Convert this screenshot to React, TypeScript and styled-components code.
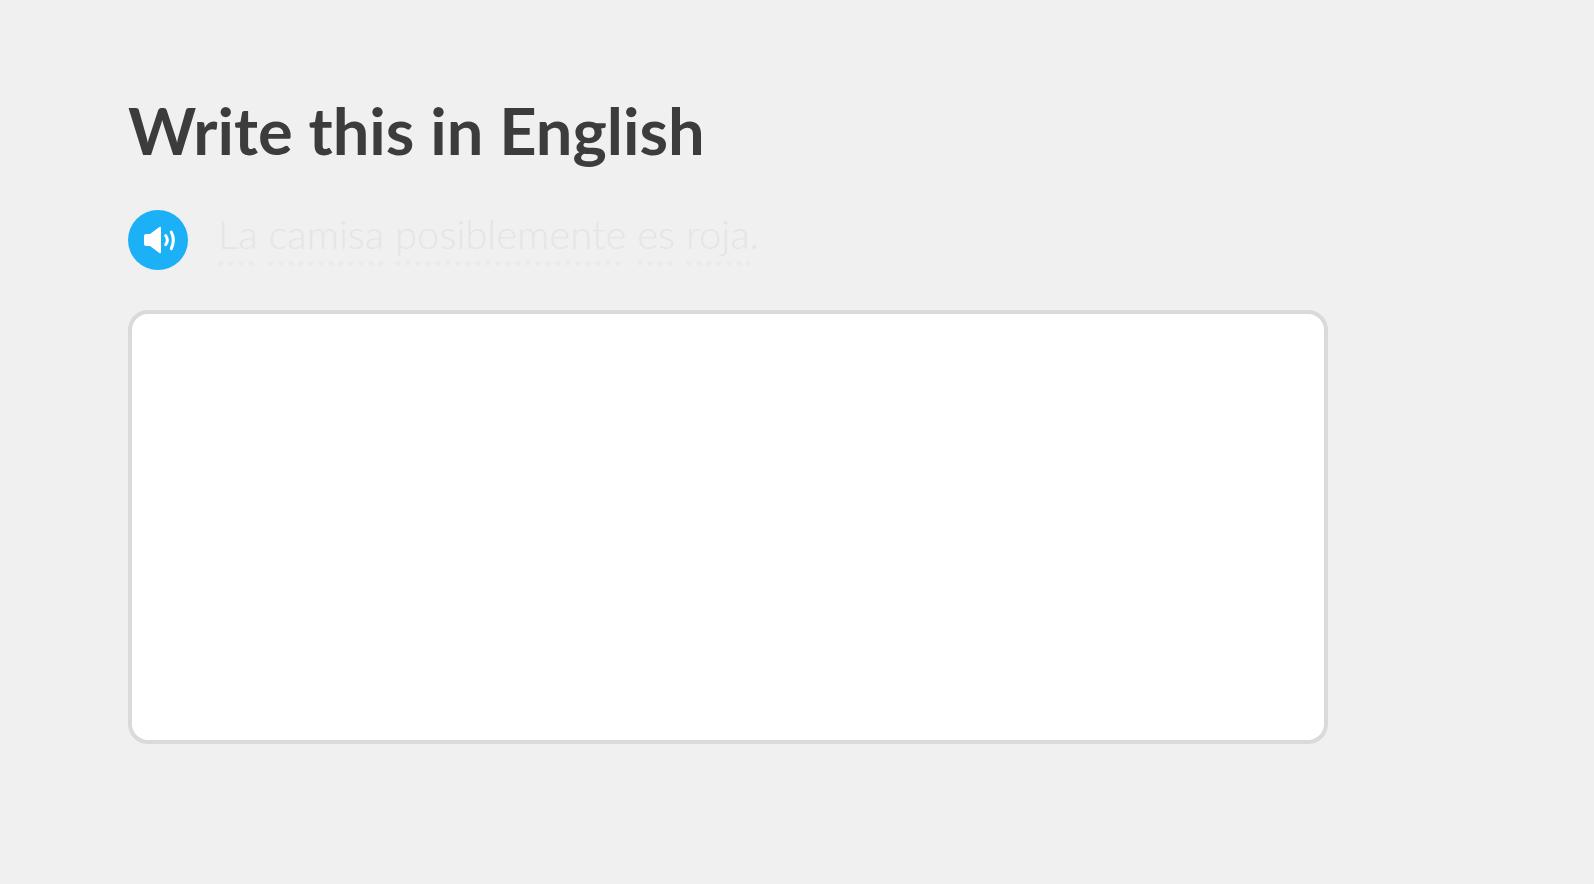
import React, { useState } from "react";
import styled, { createGlobalStyle } from "styled-components";

const GlobalStyle = createGlobalStyle`
  *, *::before, *::after { box-sizing: border-box; }
  body {
    margin: 0;
    background: #f0f0f0;
    font-family: Lato, "Open Sans", sans-serif;
  }
`;

const Page = styled.main`
  display: flex;
  flex-direction: column;
  min-height: 100vh;
  padding: 90px 266px 140px 128px;
`;

const Title = styled.h1`
  margin: 0 0 40px;
  color: #3c3c3c;
  font-size: 65px;
  font-weight: 700;
  line-height: 80px;
`;

const Prompt = styled.div`
  display: flex;
  align-items: flex-start;
  gap: 30px;
  margin-bottom: 40px;
`;

const SpeakerButton = styled.button`
  display: flex;
  align-items: center;
  justify-content: center;
  flex: none;
  width: 60px;
  height: 60px;
  padding: 0;
  border: 0;
  border-radius: 50%;
  background: #1cb0f6;
  cursor: pointer;
`;

const Sentence = styled.p`
  margin: 0;
  color: #e5e5e5;
  font-size: 40px;
  font-weight: 300;
  line-height: 48px;
`;

const Word = styled.span`
  padding-bottom: 8px;
  background: radial-gradient(circle at 3px 2px, #eaeaea 2px, transparent 3px) left bottom / 10px 5px repeat-x;
`;

const Answer = styled.textarea`
  display: block;
  width: 100%;
  height: 434px;
  padding: 20px 24px;
  border: 4px solid #dadada;
  border-radius: 20px;
  background: #fff;
  color: #3c3c3c;
  font: 400 40px/52px Lato, "Open Sans", sans-serif;
  resize: none;
  outline: none;
`;

const words = ["La", "camisa", "posiblemente", "es", "roja"];

function SpeakerIcon() {
  return (
    <svg width="60" height="60" viewBox="0 0 60 60" fill="none" aria-hidden="true">
      <path
        d="M18 24H22L31 17.3Q33 16 33 18V42Q33 44 31 42.7L22 36H18Q16 36 16 34V26Q16 24 18 24Z"
        fill="#fff"
      />
      <path
        d="M37.700 25.600Q41 30 37.700 34.600M43.300 22Q47.400 30 43.300 38.600"
        stroke="#fff"
        strokeWidth="3"
        strokeLinecap="round"
      />
    </svg>
  );
}

export default function App() {
  const [answer, setAnswer] = useState("");

  return (
    <>
      <GlobalStyle />
      <Page>
        <Title id="task-title">Write this in English</Title>
        <Prompt>
          <SpeakerButton type="button" aria-label="Listen">
            <SpeakerIcon />
          </SpeakerButton>
          <Sentence lang="es">
            {words.map((word, index) => (
              <React.Fragment key={word}>
                {index > 0 && " "}
                <Word>{word}</Word>
              </React.Fragment>
            ))}
            .
          </Sentence>
        </Prompt>
        <Answer
          aria-labelledby="task-title"
          value={answer}
          onChange={(event) => setAnswer(event.target.value)}
        />
      </Page>
    </>
  );
}
